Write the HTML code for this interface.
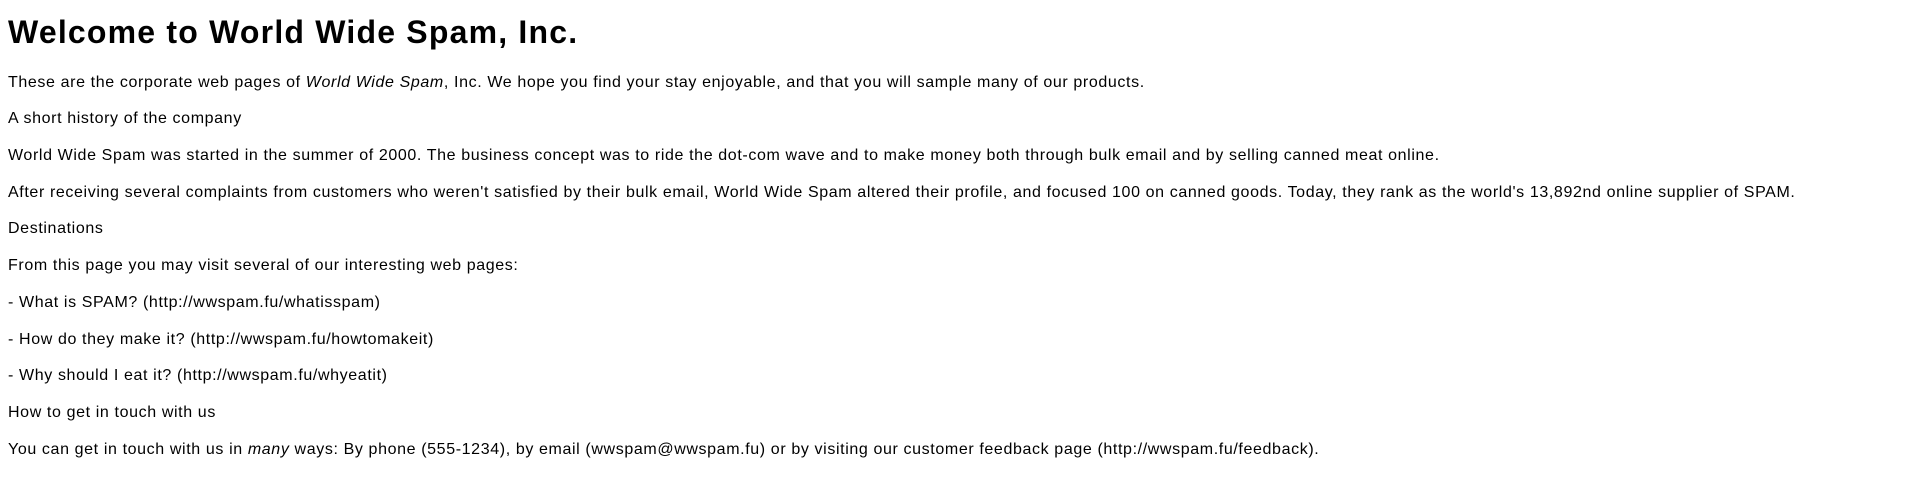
<!DOCTYPE html>
<html><head><meta charset="utf-8"><style>
html,body{margin:0;padding:0;background:#fff;color:#000;}
body{padding:0 8px;font-family:"Liberation Sans",sans-serif;width:1904px;height:482px;overflow:hidden}
h1{font-size:32px;line-height:37px;margin:14px 0 13.6px 0;font-weight:bold;letter-spacing:1.2px}
p{margin:0;font-size:16px;line-height:36.7px;white-space:nowrap;letter-spacing:0.62px}
</style></head><body>
<h1>Welcome to World Wide Spam, Inc.</h1>
<p>These are the corporate web pages of <i>World Wide Spam</i>, Inc. We hope you find your stay enjoyable, and that you will sample many of our products.</p>
<p>A short history of the company</p>
<p>World Wide Spam was started in the summer of 2000. The business concept was to ride the dot-com wave and to make money both through bulk email and by selling canned meat online.</p>
<p>After receiving several complaints from customers who weren't satisfied by their bulk email, World Wide Spam altered their profile, and focused 100 on canned goods. Today, they rank as the world's 13,892nd online supplier of SPAM.</p>
<p>Destinations</p>
<p>From this page you may visit several of our interesting web pages:</p>
<p>- What is SPAM? (http://wwspam.fu/whatisspam)</p>
<p>- How do they make it? (http://wwspam.fu/howtomakeit)</p>
<p>- Why should I eat it? (http://wwspam.fu/whyeatit)</p>
<p>How to get in touch with us</p>
<p>You can get in touch with us in <i>many</i> ways: By phone (555-1234), by email (wwspam@wwspam.fu) or by visiting our customer feedback page (http://wwspam.fu/feedback).</p>
</body></html>
